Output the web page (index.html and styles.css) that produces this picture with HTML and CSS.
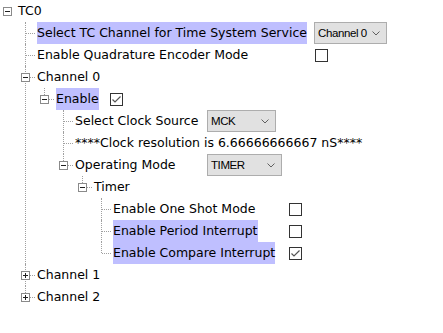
FILE: index.html
```html
<!DOCTYPE html>
<html lang="en">
<head>
    <meta charset="UTF-8">
    <title>TC0 Configuration</title>
    <link rel="stylesheet" href="styles.css">
</head>
<body>
    <ul class="tree">
        <li>
            <div class="row"><span class="toggle open"></span><span class="label">TC0</span></div>
            <ul class="group-tc">
                <li>
                    <div class="row">
                        <span class="cell"><span class="label selected">Select TC Channel for Time System Service</span></span>
                        <span class="combo combo-channel">Channel 0<svg class="chevron" viewBox="0 0 8 5"><polyline points="0.5,0.5 4,4 7.5,0.5"/></svg></span>
                    </div>
                </li>
                <li>
                    <div class="row">
                        <span class="cell"><span class="label">Enable Quadrature Encoder Mode</span></span>
                        <span class="check"></span>
                    </div>
                </li>
                <li>
                    <div class="row"><span class="toggle open"></span><span class="label">Channel 0</span></div>
                    <ul class="group-enable">
                        <li>
                            <div class="row">
                                <span class="toggle open"></span>
                                <span class="cell"><span class="label selected">Enable</span></span>
                                <span class="check checked"></span>
                            </div>
                            <ul class="group-clock">
                                <li>
                                    <div class="row">
                                        <span class="cell"><span class="label">Select Clock Source</span></span>
                                        <span class="combo combo-mck">MCK<svg class="chevron" viewBox="0 0 8 5"><polyline points="0.5,0.5 4,4 7.5,0.5"/></svg></span>
                                    </div>
                                </li>
                                <li>
                                    <div class="row"><span class="label">****Clock resolution is 6.66666666667 nS****</span></div>
                                </li>
                                <li>
                                    <div class="row">
                                        <span class="toggle open"></span>
                                        <span class="cell"><span class="label">Operating Mode</span></span>
                                        <span class="combo combo-mode">TIMER<svg class="chevron" viewBox="0 0 8 5"><polyline points="0.5,0.5 4,4 7.5,0.5"/></svg></span>
                                    </div>
                                    <ul>
                                        <li>
                                            <div class="row"><span class="toggle open"></span><span class="label">Timer</span></div>
                                            <ul class="group-timer">
                                                <li>
                                                    <div class="row">
                                                        <span class="cell"><span class="label">Enable One Shot Mode</span></span>
                                                        <span class="check"></span>
                                                    </div>
                                                </li>
                                                <li>
                                                    <div class="row">
                                                        <span class="cell"><span class="label selected">Enable Period Interrupt</span></span>
                                                        <span class="check"></span>
                                                    </div>
                                                </li>
                                                <li>
                                                    <div class="row">
                                                        <span class="cell"><span class="label selected">Enable Compare Interrupt</span></span>
                                                        <span class="check checked"></span>
                                                    </div>
                                                </li>
                                            </ul>
                                        </li>
                                    </ul>
                                </li>
                            </ul>
                        </li>
                    </ul>
                </li>
                <li>
                    <div class="row"><span class="toggle"></span><span class="label">Channel 1</span></div>
                </li>
                <li>
                    <div class="row"><span class="toggle"></span><span class="label">Channel 2</span></div>
                </li>
            </ul>
        </li>
    </ul>
</body>
</html>
```

FILE: styles.css
```css
body {
    margin: 0;
    background-color: #fff;
    font-family: "DejaVu Sans", sans-serif;
    font-size: 12.5px;
    color: #000;
}

/* arbol */
.tree,
.tree ul {
    list-style: none;
    margin: 0;
    padding: 0;
}
.tree {
    padding-left: 18px;
}
.tree ul {
    padding-left: 19px;
}
.tree li {
    position: relative;
}

/* lineas punteadas */
.tree ul > li::before {
    content: "";
    position: absolute;
    left: -12px;
    top: 0;
    bottom: 0;
    border-left: 1px dotted #a0a0a0;
}
.tree ul > li:last-child::before {
    bottom: auto;
    height: 11px;
}
.tree ul > li::after {
    content: "";
    position: absolute;
    left: -11px;
    top: 11px;
    width: 9px;
    border-top: 1px dotted #a0a0a0;
}

.row {
    display: flex;
    align-items: center;
    height: 22px;
}

.label {
    display: inline-block;
    line-height: 22px;
    height: 22px;
    white-space: nowrap;
}
.label.selected {
    background-color: #bfbfff;
}

.cell {
    display: inline-block;
    flex-shrink: 0;
}
.group-tc > li > .row > .cell { width: 277px; }
.group-enable > li > .row > .cell { width: 53px; }
.group-clock > li > .row > .cell { width: 132px; }
.group-timer > li > .row > .cell { width: 175px; }

/* expandir / contraer */
.toggle {
    position: absolute;
    left: -16px;
    top: 7px;
    width: 7px;
    height: 7px;
    border: 1px solid #8a8a8a;
    background-color: #fff;
    z-index: 1;
}
.toggle::before,
.toggle::after {
    content: "";
    position: absolute;
    background-color: #202020;
}
.toggle::before {
    left: 1px;
    top: 3px;
    width: 5px;
    height: 1px;
}
.toggle::after {
    left: 3px;
    top: 1px;
    width: 1px;
    height: 5px;
}
.toggle.open::after {
    display: none;
}
.tree > li > .row > .toggle {
    left: -15px;
}

/* controles */
.check {
    display: inline-block;
    box-sizing: border-box;
    width: 13px;
    height: 13px;
    border: 1px solid #333;
    background-color: #fff;
    margin-left: 1px;
}
.check.checked {
    background: #fff url("data:image/svg+xml,%3Csvg xmlns='http://www.w3.org/2000/svg' width='11' height='11'%3E%3Cpolyline points='1.5,5.5 4,8 9.5,2.5' fill='none' stroke='%23555' stroke-width='1.2'/%3E%3C/svg%3E") no-repeat 0 0;
}

.combo {
    display: inline-flex;
    align-items: center;
    justify-content: space-between;
    box-sizing: border-box;
    height: 22px;
    padding: 0 6px 0 3px;
    border: 1px solid #adadad;
    background-color: #e1e1e1;
    font-family: "Liberation Sans", Arial, sans-serif;
    font-size: 11.5px;
    letter-spacing: -0.4px;
    color: #000;
}
.combo-channel { width: 73px; }
.combo-mck { width: 69px; }
.combo-mode { width: 75px; }

.chevron {
    width: 8px;
    height: 5px;
    fill: none;
    stroke: #606060;
    stroke-width: 1;
}
```
